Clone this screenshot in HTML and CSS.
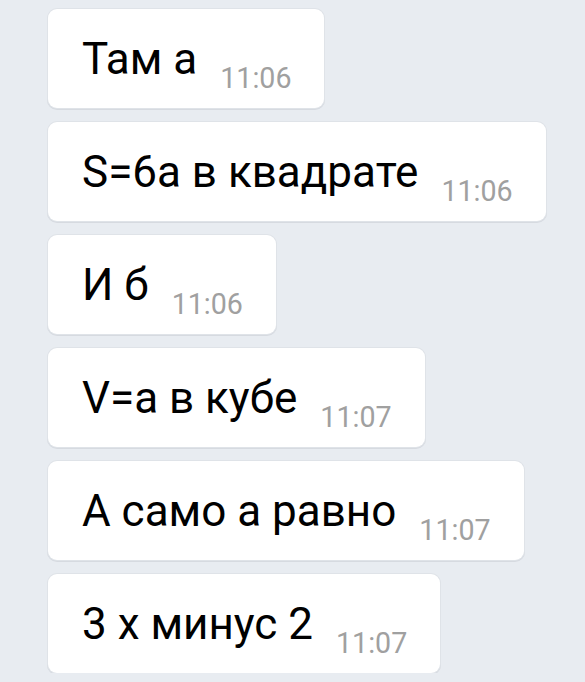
FILE: index.html
```html
<!DOCTYPE html>
<html lang="ru">
<head>
    <meta charset="UTF-8">
    <title>Чат</title>
    <link rel="stylesheet" href="styles.css">
</head>
<body>
    <div class="chat">
        <div class="msg"><span class="text">Там а</span><span class="time">11:06</span></div>
        <div class="msg"><span class="text">S=6а в квадрате</span><span class="time">11:06</span></div>
        <div class="msg"><span class="text">И б</span><span class="time">11:06</span></div>
        <div class="msg"><span class="text">V=а в кубе</span><span class="time">11:07</span></div>
        <div class="msg"><span class="text">А само а равно</span><span class="time">11:07</span></div>
        <div class="msg"><span class="text">3 х минус 2</span><span class="time">11:07</span></div>
    </div>
</body>
</html>
```

FILE: styles.css
```css
body {
    margin: 0;
    background: #e8ecf1;
    font-family: Roboto, "Noto Sans", sans-serif;
}
.chat {
    display: flex;
    flex-direction: column;
    align-items: flex-start;
    gap: 14px;
    padding: 9px 0 0 48px;
}
.msg {
    display: flex;
    align-items: flex-end;
    gap: 23px;
    background: #fff;
    border-radius: 9px;
    box-shadow: 0 0 0 1px #dfe3e8, 0 1px 0 1px #d6dae0;
    padding: 24px 33px 13px 34px;
}
.text {
    font-size: 44px;
    line-height: 52px;
    color: #000;
    margin-bottom: 10px;
}
.time {
    font-size: 28.6px;
    line-height: 34px;
    color: #a0a0a0;
}
```
